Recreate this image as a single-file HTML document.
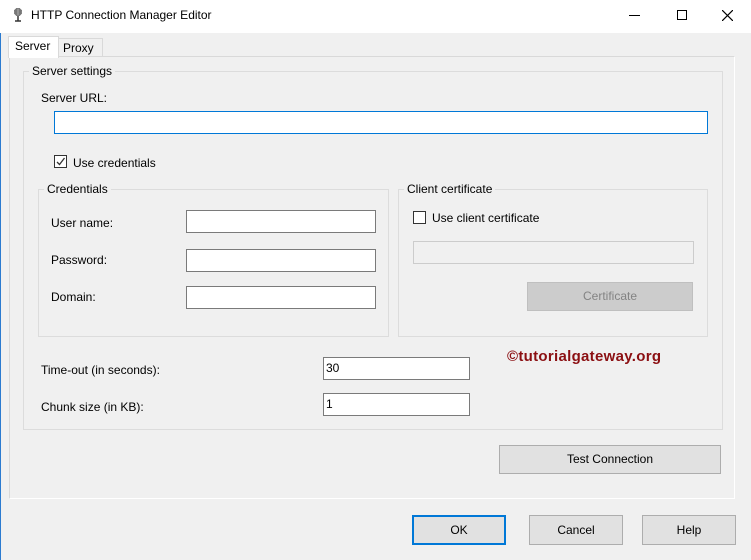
<!DOCTYPE html>
<html><head><style>
*{box-sizing:border-box}
body{margin:0;width:751px;height:560px;background:#f0f0f0;font-family:"Liberation Sans",sans-serif;font-size:12px;color:#000;position:relative;overflow:hidden}
.a{position:absolute}
.title{left:0;top:0;width:751px;height:33px;background:#fff}
.in{position:absolute;background:#fff;border:1px solid #7a7a7a}
.grp{position:absolute;border:1px solid #dcdcdc}
.lg{position:absolute;background:#f0f0f0;padding:0 3px;top:-8px;left:5px}
.btn{position:absolute;background:#e1e1e1;border:1px solid #adadad;text-align:center;font-size:12px}
.cb{position:absolute;width:13px;height:13px;border:1px solid #333;background:#fff}
</style></head><body>
<div class="a" style="left:0;top:0;width:1px;height:560px;background:#2b7bd0"></div>
<div class="a title">
 <svg class="a" style="left:12px;top:7px" width="12" height="17" viewBox="0 0 12 17"><circle cx="6" cy="5" r="4" fill="#444"/><path d="M2 5h8M6 1v8M3 3h6M3 7h6" stroke="#ccc" stroke-width="0.7"/><path d="M6 9v5M3 14h6" stroke="#333" stroke-width="1.5"/></svg>
 <div class="a" style="left:31px;top:8px;font-size:12px">HTTP Connection Manager Editor</div>
 <div class="a" style="left:629px;top:15px;width:11px;height:1px;background:#000"></div>
 <div class="a" style="left:677px;top:10px;width:10px;height:10px;border:1px solid #000"></div>
 <svg class="a" style="left:722px;top:10px" width="11" height="11"><path d="M0 0L11 11M11 0L0 11" stroke="#000" stroke-width="1.2"/></svg>
</div>
<div class="a" style="left:58px;top:38px;width:45px;height:19px;border:1px solid #d9d9d9;border-bottom:none;background:#f0f0f0"></div>
<div class="a" style="left:63px;top:41px">Proxy</div>
<div class="a" style="left:9px;top:56px;width:726px;height:443px;border:1px solid #d9d9d9;border-right-color:#fff;border-bottom-color:#fff;background:#f0f0f0"></div>
<div class="a" style="left:8px;top:36px;width:51px;height:22px;border:1px solid #d9d9d9;border-bottom:none;background:#fff"></div>
<div class="a" style="left:15px;top:39px">Server</div>
<div class="grp" style="left:23px;top:71px;width:700px;height:359px"><span class="lg">Server settings</span></div>
<div class="a" style="left:41px;top:91px">Server URL:</div>
<div class="in" style="left:54px;top:111px;width:654px;height:23px;border-color:#0078d7"></div>
<div class="cb" style="left:54px;top:155px"><svg width="11" height="11" style="position:absolute;left:0;top:0"><path d="M2 6l2.5 2.5L9.5 2" stroke="#333" fill="none" stroke-width="1.3"/></svg></div>
<div class="a" style="left:73px;top:156px">Use credentials</div>
<div class="grp" style="left:38px;top:189px;width:351px;height:148px"><span class="lg">Credentials</span></div>
<div class="a" style="left:51px;top:216px">User name:</div>
<div class="a" style="left:51px;top:253px">Password:</div>
<div class="a" style="left:51px;top:290px">Domain:</div>
<div class="in" style="left:186px;top:210px;width:190px;height:23px"></div>
<div class="in" style="left:186px;top:249px;width:190px;height:23px"></div>
<div class="in" style="left:186px;top:286px;width:190px;height:23px"></div>
<div class="grp" style="left:398px;top:189px;width:310px;height:148px"><span class="lg">Client certificate</span></div>
<div class="cb" style="left:413px;top:211px"></div>
<div class="a" style="left:432px;top:211px">Use client certificate</div>
<div class="a" style="left:413px;top:241px;width:281px;height:23px;border:1px solid #ccc;background:#f0f0f0"></div>
<div class="btn" style="left:527px;top:282px;width:166px;height:29px;line-height:27px;background:#cccccc;border-color:#bfbfbf;color:#838383">Certificate</div>
<div class="a" style="left:41px;top:363px">Time-out (in seconds):</div>
<div class="a" style="left:41px;top:400px">Chunk size (in KB):</div>
<div class="in" style="left:323px;top:357px;width:147px;height:23px;padding:3px 2px">30</div>
<div class="in" style="left:323px;top:393px;width:147px;height:23px;padding:3px 2px">1</div>
<div class="a" style="left:507px;top:348px;color:#8b0f12;font-weight:bold;font-size:15px;letter-spacing:0.3px">©tutorialgateway.org</div>
<div class="btn" style="left:499px;top:445px;width:222px;height:29px;line-height:27px">Test Connection</div>
<div class="btn" style="left:412px;top:515px;width:94px;height:30px;line-height:26px;border:2px solid #0078d7">OK</div>
<div class="btn" style="left:529px;top:515px;width:94px;height:30px;line-height:28px">Cancel</div>
<div class="btn" style="left:642px;top:515px;width:94px;height:30px;line-height:28px">Help</div>
</body></html>
